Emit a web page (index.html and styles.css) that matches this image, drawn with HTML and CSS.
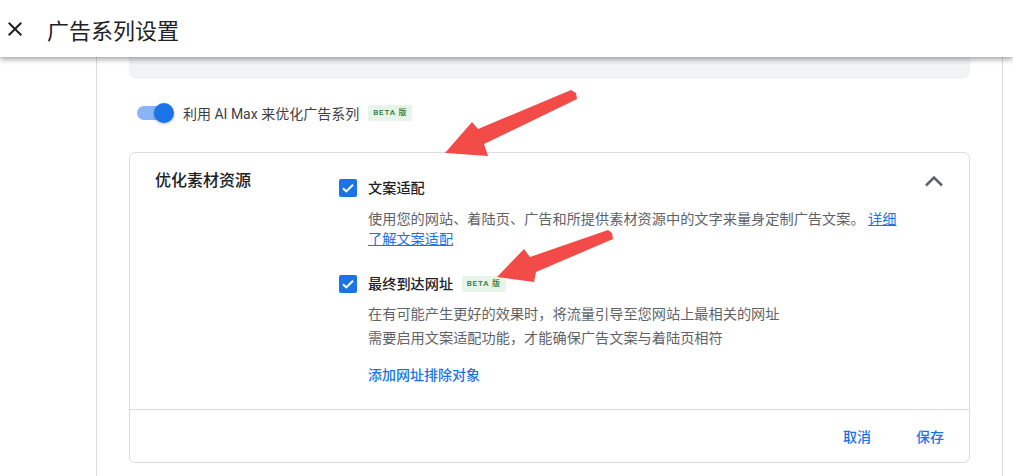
FILE: index.html
```html
<!DOCTYPE html>
<html lang="zh-CN">
<head>
  <meta charset="UTF-8" />
  <title>广告系列设置</title>
  <link rel="stylesheet" href="styles.css">
</head>
<body>
  <header class="topbar">
    <svg class="close" viewBox="0 0 24 24" width="24" height="24"><path d="M19 6.41 17.59 5 12 10.59 6.41 5 5 6.41 10.59 12 5 17.59 6.41 19 12 13.41 17.59 19 19 17.59 13.41 12z" fill="#202124"/></svg>
    <h1>广告系列设置</h1>
  </header>

  <div class="page">
    <div class="side"></div>
    <div class="panel">
      <div class="grey-box"></div>

      <div class="toggle-row">
        <div class="toggle"><div class="knob"></div></div>
        <span>利用 AI Max 来优化广告系列</span>
        <span class="beta">BETA 版</span>
      </div>

      <div class="card">
        <div class="card-body">
          <div class="card-title">优化素材资源</div>
          <div class="options">
            <div class="option">
              <div class="check"><svg viewBox="0 0 18 18" width="18" height="18"><path d="M4 9.2l3.3 3.2L14 5.8" fill="none" stroke="#fff" stroke-width="2"/></svg></div>
              <div class="opt-text">
                <div class="opt-title">文案适配</div>
                <p class="desc">使用您的网站、着陆页、广告和所提供素材资源中的文字来量身定制广告文案。 <a href="#">详细了解文案适配</a></p>
              </div>
            </div>
            <div class="option second">
              <div class="check"><svg viewBox="0 0 18 18" width="18" height="18"><path d="M4 9.2l3.3 3.2L14 5.8" fill="none" stroke="#fff" stroke-width="2"/></svg></div>
              <div class="opt-text">
                <div class="opt-title">最终到达网址 <span class="beta">BETA 版</span></div>
                <p class="desc big">在有可能产生更好的效果时，将流量引导至您网站上最相关的网址<br>需要启用文案适配功能，才能确保广告文案与着陆页相符</p>
                <div class="add-link">添加网址排除对象</div>
              </div>
            </div>
          </div>
          <svg class="chevron" viewBox="0 0 24 24" width="24" height="24"><path d="M4 16.5 12 8.5l8 8" fill="none" stroke="#5f6368" stroke-width="2.5"/></svg>
        </div>
        <div class="card-footer">
          <button class="text-btn">取消</button>
          <button class="text-btn">保存</button>
        </div>
      </div>
    </div>
  </div>

  <svg class="arrows" viewBox="0 0 1013 476" width="1013" height="476">
    <polygon points="445,153 472,122 478,129 571,90 576,93 577,99 484,144 488,156" fill="#f34c48"/>
    <polygon points="497,277 524,249 530,257 608,230 612,233 613,239 536,272 534,282" fill="#f34c48"/>
  </svg>
</body>
</html>
```

FILE: styles.css
```css
body {
  margin: 0;
  font-family: Roboto, "Noto Sans CJK SC", sans-serif;
  color: #3c4043;
  background: #fff;
  width: 1013px;
  height: 476px;
  overflow: hidden;
  position: relative;
}

.topbar {
  height: 57px;
  display: flex;
  align-items: center;
  padding-left: 3px;
  background: #fff;
  box-shadow: 0 2px 6px rgba(0, 0, 0, 0.4);
  position: relative;
  z-index: 2;
}

.close {
  margin-right: 20px;
}

.topbar h1 {
  margin: 0;
  font-size: 22px;
  font-weight: 400;
  color: #202124;
}

.page {
  display: flex;
}

.side {
  width: 96px;
}

.panel {
  width: 841px;
  padding: 0 32px;
  border-left: 1px solid #dadce0;
  border-right: 1px solid #dadce0;
  height: 420px;
}

.grey-box {
  height: 22px;
  background: #f1f3f4;
  border-radius: 0 0 8px 8px;
}

.toggle-row {
  display: flex;
  align-items: center;
  height: 24px;
  margin-top: 22px;
  font-size: 14px;
}

.toggle {
  width: 34px;
  height: 14px;
  margin-left: 8px;
  margin-right: 12px;
  border-radius: 7px;
  background: #8ab4f8;
  display: flex;
  align-items: center;
  justify-content: flex-end;
}

.knob {
  width: 20px;
  height: 20px;
  margin-right: -3px;
  border-radius: 50%;
  background: #1a73e8;
  box-shadow: 0 1px 3px rgba(0, 0, 0, 0.3);
}

.beta {
  display: inline-block;
  height: 16px;
  line-height: 16px;
  padding: 0 5px;
  margin-left: 9px;
  border-radius: 2px;
  background: #e6f4ea;
  color: #188038;
  font-size: 8px;
  font-weight: 500;
  letter-spacing: 0.8px;
  vertical-align: middle;
}

.card {
  margin-top: 27px;
  border: 1px solid #dadce0;
  border-radius: 6px;
}

.card-body {
  display: flex;
  padding: 16px 23px 0 25px;
  height: 240px;
}

.card-title {
  width: 184px;
  font-size: 16px;
  line-height: 24px;
  font-weight: 500;
  color: #202124;
}

.options {
  flex: 1;
  padding-top: 9px;
  padding-right: 13px;
}

.option {
  display: flex;
  gap: 11px;
}

.option.second {
  margin-top: 25px;
}

.check {
  width: 18px;
  height: 18px;
  margin-top: 1px;
  border-radius: 2px;
  background: #1a73e8;
  display: flex;
}

.opt-text {
  flex: 1;
}

.opt-title {
  font-size: 14.2px;
  line-height: 20px;
  font-weight: 500;
  color: #202124;
}

.opt-title .beta {
  margin-left: 5px;
  margin-top: -2px;
}

.desc {
  margin: 11px 0 0;
  font-size: 14.2px;
  line-height: 20px;
  color: #5f6368;
}

.desc.big {
  margin-top: 8px;
  line-height: 24px;
}

.desc a {
  color: #1a73e8;
}

.add-link {
  margin-top: 15px;
  font-size: 14px;
  line-height: 20px;
  font-weight: 500;
  color: #1a73e8;
}

.chevron {
  flex-shrink: 0;
}

.card-footer {
  display: flex;
  justify-content: flex-end;
  gap: 21px;
  padding: 8px 13px 8px 0;
  border-top: 1px solid #dadce0;
}

.text-btn {
  height: 36px;
  padding: 0 12px;
  border: none;
  background: none;
  font-family: Roboto, "Noto Sans CJK SC", sans-serif;
  font-size: 14px;
  font-weight: 500;
  color: #1a73e8;
}

.arrows {
  position: absolute;
  top: 0;
  left: 0;
  pointer-events: none;
  z-index: 3;
}
```
